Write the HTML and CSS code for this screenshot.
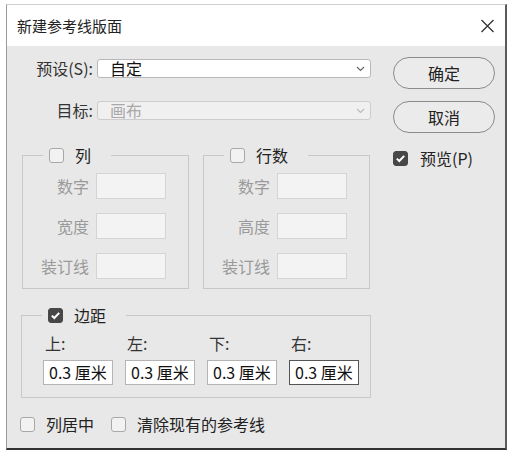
FILE: index.html
```html
<!DOCTYPE html>
<html lang="zh-CN">
<head>
<meta charset="utf-8">
<title>新建参考线版面</title>
<link rel="stylesheet" href="styles.css">
</head>
<body>
<div class="window">
  <div class="titlebar">
    <span class="title">新建参考线版面</span>
    <svg class="close" width="15" height="14" viewBox="0 0 15 14"><path d="M1.5 1 L13.5 13 M13.5 1 L1.5 13" stroke="#333" stroke-width="1.3" fill="none"/></svg>
  </div>
  <div class="content">
    <div class="main">
      <div class="row">
        <span class="lbl">预设(S):</span>
        <div class="select"><span>自定</span><svg width="9" height="6" viewBox="0 0 9 6"><polyline points="1,1 4.5,4.5 8,1" stroke="#666" stroke-width="1.2" fill="none"/></svg></div>
      </div>
      <div class="row">
        <span class="lbl">目标:</span>
        <div class="select disabled"><span>画布</span><svg width="9" height="6" viewBox="0 0 9 6"><polyline points="1,1 4.5,4.5 8,1" stroke="#bbb" stroke-width="1.2" fill="none"/></svg></div>
      </div>
      <div class="groups">
        <fieldset class="group">
          <legend><span class="cb"></span><span>列</span></legend>
          <div class="frow"><span class="flabel">数字</span><span class="finput"></span></div>
          <div class="frow"><span class="flabel">宽度</span><span class="finput"></span></div>
          <div class="frow"><span class="flabel">装订线</span><span class="finput"></span></div>
        </fieldset>
        <fieldset class="group">
          <legend><span class="cb"></span><span>行数</span></legend>
          <div class="frow"><span class="flabel">数字</span><span class="finput"></span></div>
          <div class="frow"><span class="flabel">高度</span><span class="finput"></span></div>
          <div class="frow"><span class="flabel">装订线</span><span class="finput"></span></div>
        </fieldset>
      </div>
      <fieldset class="margins">
        <legend><span class="cb on"><svg width="15" height="15" viewBox="0 0 15 15"><polyline points="3.8,7.6 6.3,10 11.2,4.9" stroke="#fff" stroke-width="2" fill="none"/></svg></span><span>边距</span></legend>
        <div class="mgrid">
          <span class="mlabel">上:</span>
          <span class="mlabel">左:</span>
          <span class="mlabel">下:</span>
          <span class="mlabel">右:</span>
          <span class="minput">0.3 厘米</span>
          <span class="minput">0.3 厘米</span>
          <span class="minput">0.3 厘米</span>
          <span class="minput focus">0.3 厘米</span>
        </div>
      </fieldset>
      <div class="options">
        <div class="opt"><span class="cb"></span><span>列居中</span></div>
        <div class="opt"><span class="cb"></span><span>清除现有的参考线</span></div>
      </div>
    </div>
    <div class="side">
      <div class="btn">确定</div>
      <div class="btn">取消</div>
      <div class="opt preview"><span class="cb on"><svg width="15" height="15" viewBox="0 0 15 15"><polyline points="3.8,7.6 6.3,10 11.2,4.9" stroke="#fff" stroke-width="2" fill="none"/></svg></span><span>预览(P)</span></div>
    </div>
  </div>
</div>
</body>
</html>
```

FILE: styles.css
```css
html, body {
  margin: 0;
  background: #fff;
}
body {
  font-family: "Noto Sans CJK SC", "Noto Sans", sans-serif;
  font-size: 16px;
  color: #222;
}
.window {
  margin: 4px 0 0 6px;
  width: 501px;
  height: 446px;
  box-sizing: border-box;
  border-left: 1px solid #9a9a9a;
  border-top: 1px solid #cfcfcf;
  border-right: 2px solid #5a5a5a;
  border-bottom: 2px solid #333;
  background: #e8e8e8;
  display: flex;
  flex-direction: column;
}
.titlebar {
  height: 41px;
  flex: none;
  background: #fff;
  display: flex;
  align-items: center;
  justify-content: space-between;
  padding: 0 10px;
}
.title {
  font-size: 15px;
  line-height: 20px;
  color: #222;
}
.close { display: block; }
.content {
  display: flex;
  padding-top: 12px;
}
.main {
  width: 364px;
  padding-top: 1px;
  display: flex;
  flex-direction: column;
}
.row {
  display: flex;
  align-items: center;
  gap: 4px;
  height: 19px;
}
.row + .row { margin-top: 23px; }
.lbl {
  width: 86px;
  text-align: right;
  line-height: 19px;
  color: #333;
}
.select {
  width: 274px;
  height: 19px;
  box-sizing: border-box;
  border: 1px solid #b8b8b8;
  border-radius: 3px;
  background: #fff;
  display: flex;
  align-items: center;
  justify-content: space-between;
  padding: 0 5px 0 12px;
  line-height: 17px;
  color: #111;
}
.select.disabled {
  background: #f0f0f0;
  border-color: #cdcdcd;
  color: #a8a8a8;
}
.groups {
  display: flex;
  gap: 14px;
  margin: 27px 0 0 15px;
}
fieldset {
  margin: 0;
  min-width: 0;
  border: 1px solid #c8c8c8;
}
legend {
  margin-left: 20px;
  padding: 0 20px 0 6px;
  display: flex;
  align-items: center;
  gap: 11px;
  height: 16px;
  line-height: 16px;
  color: #222;
}
.group {
  padding: 10px 22px 9px 0;
}
.frow {
  display: flex;
  align-items: center;
  gap: 7px;
}
.frow + .frow { margin-top: 14px; }
.flabel {
  width: 66px;
  text-align: right;
  color: #9a9a9a;
  line-height: 20px;
}
.finput {
  width: 70px;
  height: 26px;
  box-sizing: border-box;
  border: 1px solid #d4d4d4;
  background: #f3f3f3;
}
.margins {
  margin: 18px 0 0 14px;
  width: 350px;
  box-sizing: border-box;
  padding: 10px 0 12px 21px;
}
.margins legend {
  margin-left: -1px;
}
.mgrid {
  display: grid;
  grid-template-columns: repeat(4, 70px);
  column-gap: 12px;
  row-gap: 7px;
}
.mlabel {
  line-height: 20px;
  padding-left: 2px;
  color: #333;
}
.minput {
  height: 25px;
  box-sizing: border-box;
  border: 1px solid #b4b4b4;
  background: #fff;
  padding-left: 5px;
  line-height: 23px;
  color: #111;
  white-space: nowrap;
}
.minput.focus { border-color: #555; }
.options {
  display: flex;
  align-items: center;
  gap: 17px;
  height: 20px;
  margin-top: 16px;
  padding-left: 13px;
}
.opt {
  display: flex;
  align-items: center;
  gap: 11px;
  line-height: 20px;
}
.cb {
  width: 15px;
  height: 15px;
  box-sizing: border-box;
  border: 1px solid #a8a8a8;
  border-radius: 3px;
  background: #f2f2f2;
  flex: none;
}
.cb.on {
  background: #474747;
  border-color: #474747;
}
.cb svg {
  display: block;
  margin: -1px;
}
.side {
  margin-left: 22px;
  margin-top: -1px;
  display: flex;
  flex-direction: column;
}
.btn {
  width: 102px;
  height: 32px;
  box-sizing: border-box;
  border: 1px solid #8a8a8a;
  border-radius: 16px;
  background: #ebebeb;
  text-align: center;
  line-height: 30px;
  color: #222;
}
.btn + .btn { margin-top: 12px; }
.preview {
  margin-top: 15px;
  gap: 12px;
}
```
